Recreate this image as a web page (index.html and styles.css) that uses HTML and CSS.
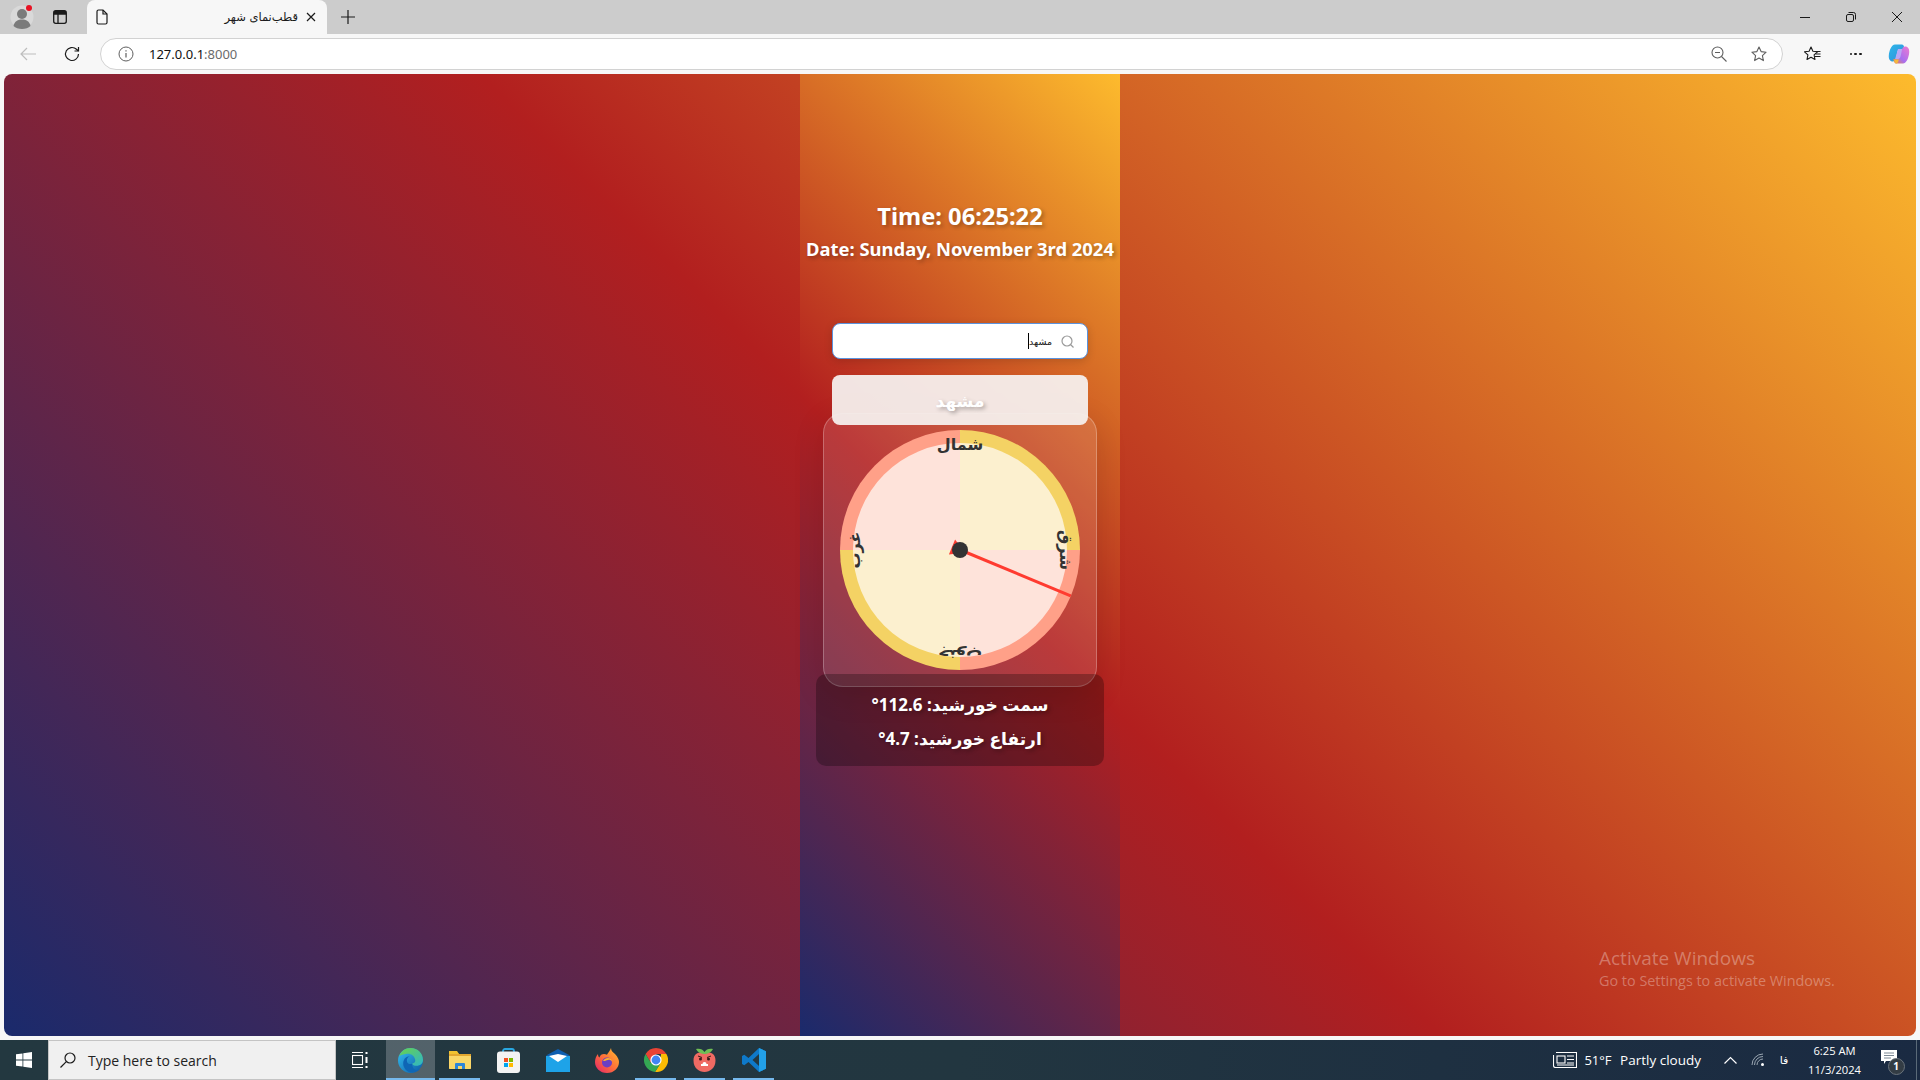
FILE: index.html
```html
<!DOCTYPE html>
<html lang="fa">
<head>
<meta charset="utf-8">
<title>قطب‌نمای شهر</title>
<link rel="stylesheet" href="styles.css">
</head>
<body>
<div class="screen" dir="ltr">
  <header class="tabstrip">
    <div class="profile">
      <svg width="24" height="24" viewBox="0 0 24 24"><circle cx="12" cy="12" r="11.5" fill="#d9d9d9"/><circle cx="12" cy="9" r="5" fill="#7b7b7b"/><path d="M3.5 21c1-5 4.500-6.500 8.500-6.500s7.500 1.500 8.500 6.500c-2 1.800-5 3-8.500 3s-6.500-1.200-8.500-3z" fill="#7b7b7b"/></svg>
      <span class="profile-dot"></span>
    </div>
    <svg class="sidebar-icon" width="16" height="16" viewBox="0 0 16 16" fill="none" stroke="#1a1a1a" stroke-width="1.3"><rect x="1.700" y="1.700" width="12.600" height="12.600" rx="2"/><path d="M1.700 5h12.600M6 5v9.300"/><path d="M2 2h12v3H2z" fill="#1a1a1a" stroke="none"/></svg>
    <div class="tab">
      <svg width="12" height="16" viewBox="0 0 12 16" fill="none" stroke="#1a1a1a" stroke-width="1.200"><path d="M1 2.500a1.500 1.500 0 0 1 1.500-1.500h4.500l4 4v8.500a1.500 1.500 0 0 1-1.500 1.500h-7a1.500 1.500 0 0 1-1.500-1.500z"/><path d="M7 1v4h4"/></svg>
      <span class="tab-title" dir="rtl">قطب‌نمای شهر</span>
      <svg class="tab-close" width="10" height="10" viewBox="0 0 10 10" stroke="#1a1a1a" stroke-width="1.200"><path d="M1 1l8 8M9 1l-8 8"/></svg>
    </div>
    <svg class="new-tab" width="14" height="14" viewBox="0 0 14 14" stroke="#1a1a1a" stroke-width="1.200"><path d="M7 0v14M0 7h14"/></svg>
    <div class="window-controls">
      <svg width="10" height="10" viewBox="0 0 10 10" stroke="#1a1a1a"><path d="M0 5.500h10"/></svg>
      <svg width="10" height="10" viewBox="0 0 10 10" fill="none" stroke="#1a1a1a"><rect x=".5" y="2.500" width="7" height="7" rx="1.500"/><path d="M2.500 .5h5a2 2 0 0 1 2 2v5"/></svg>
      <svg width="10" height="10" viewBox="0 0 10 10" stroke="#1a1a1a"><path d="M0 0l10 10M10 0l-10 10"/></svg>
    </div>
  </header>

  <nav class="toolbar">
    <svg class="back" width="16" height="14" viewBox="0 0 16 14" fill="none" stroke="#bdbdbd" stroke-width="1.200"><path d="M16 7H1M7 1L1 7l6 6"/></svg>
    <svg class="reload" width="16" height="16" viewBox="0 0 16 16" fill="none" stroke="#1a1a1a" stroke-width="1.200"><path d="M14.500 8a6.500 6.500 0 1 1-2-4.700L14.500 5"/><path d="M14.500 1v4h-4"/></svg>
    <div class="address">
      <svg width="16" height="16" viewBox="0 0 16 16" fill="none" stroke="#5f5f5f"><circle cx="8" cy="8" r="7"/><path d="M8 7v4.500M8 4.200v1.300" stroke-width="1.200"/></svg>
      <span class="url">127.0.0.1<span class="url-port">:8000</span></span>
      <span class="spacer"></span>
      <svg width="16" height="16" viewBox="0 0 16 16" fill="none" stroke="#5f5f5f" stroke-width="1.100"><circle cx="6.500" cy="6.500" r="5.500"/><path d="M10.500 10.500L15.500 15.500M4 6.500h5"/></svg>
      <svg class="star" width="16" height="16" viewBox="0 0 16 16" fill="none" stroke="#5f5f5f" stroke-width="1.100"><path d="M8 1l2.100 4.600 5 .6-3.700 3.400 1 5-4.400-2.500-4.400 2.500 1-5L.9 6.200l5-.6z" stroke-linejoin="round"/></svg>
    </div>
    <svg class="favs" width="17" height="16" viewBox="0 0 17 16" fill="none" stroke="#1a1a1a" stroke-width="1.100"><path d="M7 1l1.900 4.300 4.600.5-3.400 3.100.9 4.600-4-2.300-4 2.300.9-4.600L.5 5.800l4.600-.5z" stroke-linejoin="round"/><path d="M11 5.500h5.500M11.500 8h5M11 10.500h5.500" /></svg>
    <div class="dots"><i></i><i></i><i></i></div>
    <svg class="copilot" width="22" height="22" viewBox="0 0 22 22">
      <defs>
        <linearGradient id="cpa" x1="0" y1="0" x2="1" y2="1"><stop offset="0" stop-color="#2fb7ea"/><stop offset=".55" stop-color="#2fa0e0"/><stop offset="1" stop-color="#3ecf7a"/></linearGradient>
        <linearGradient id="cpb" x1="1" y1="0" x2="0" y2="1"><stop offset="0" stop-color="#ee7ad0"/><stop offset=".6" stop-color="#a86ff0"/><stop offset="1" stop-color="#f08a30"/></linearGradient>
      </defs>
      <path d="M7 1.500h7c1 0 1.500.8 1.800 1.800L17 6 12 6c-1.500 0-2 1-2.500 2.500L7.800 16c-.4 1.300-1.300 2.500-3 2.500C2 18.500.5 16 .8 12.500 1.200 7.500 3.500 1.500 7 1.500z" fill="url(#cpa)"/>
      <path d="M10 6h6l-2.500 9-1 1.500H7z" fill="#b9a6f5"/>
      <path d="M15 20.500H8c-1 0-1.500-.8-1.800-1.800L5 16h5c1.500 0 2-1 2.500-2.500L14.200 6c.4-1.300 1.300-2.500 3-2.500 2.800 0 4.300 2.500 4 6-.4 5-2.700 11-6.200 11z" fill="url(#cpb)"/>
      <path d="M9 20.500c-1 0-2-.5-2.500-2L6 16.500h5l-1 2.500z" fill="#f5b83d"/>
    </svg>
  </nav>

  <div class="window-body">
    <main class="page">
      <section class="column">
        <div class="clock">
          <h1 class="time">Time: 06:25:22</h1>
          <h2 class="date">Date: Sunday, November 3rd 2024</h2>
        </div>
        <div class="search" dir="rtl">
          <svg width="13" height="13" viewBox="0 0 13 13" fill="none" stroke="#9a9a9a" stroke-width="1.200"><circle cx="6" cy="6" r="5"/><path d="M9.500 9.500l3 3"/></svg>
          <span class="search-text">مشهد</span><span class="caret"></span>
        </div>
        <div class="suggestion" dir="rtl">مشهد</div>
        <div class="compass-card">
          <div class="compass">
            <div class="compass-face"></div>
            <span class="dir dir-n">شمال</span>
            <span class="dir dir-e">شرق</span>
            <span class="dir dir-s">جنوب</span>
            <span class="dir dir-w">غرب</span>
            <div class="needle"></div>
            <div class="hub"></div>
          </div>
        </div>
        <div class="sun-info" dir="rtl">
          <p>سمت خورشید: 112.6°</p>
          <p>ارتفاع خورشید: 4.7°</p>
        </div>
      </section>
      <div class="activate">
        <div class="activate-title">Activate Windows</div>
        <div class="activate-sub">Go to Settings to activate Windows.</div>
      </div>
    </main>
  </div>

  <footer class="taskbar">
    <div class="start">
      <svg width="16" height="16" viewBox="0 0 16 16" fill="#fff"><path d="M0 2.300l6.500-.9v6.200H0zM7.300 1.300L16 0v7.600H7.300zM0 8.400h6.500v6.200L0 13.700zM7.300 8.400H16V16l-8.700-1.300z"/></svg>
    </div>
    <div class="task-search">
      <svg width="16" height="16" viewBox="0 0 16 16" fill="none" stroke="#1a1a1a" stroke-width="1.200"><circle cx="10" cy="6" r="5"/><path d="M6.300 9.700L.5 15.500"/></svg>
      <span>Type here to search</span>
    </div>
    <div class="task-view">
      <svg width="16" height="16" viewBox="0 0 16 16" fill="none" stroke="#fff" stroke-width="1.100"><path d="M0 .5h11M0 15.500h11"/><rect x=".5" y="3.500" width="10" height="9"/><path d="M14.500 0v2M14.500 5v6M14.500 14v2" stroke-width="2"/></svg>
    </div>
    <div class="apps">
      <div class="app app-edge running">
        <svg width="25" height="25" viewBox="0 0 24 24">
          <defs>
            <linearGradient id="ed1" x1="0" y1="0" x2="1" y2="1"><stop offset="0" stop-color="#35c1f1"/><stop offset="1" stop-color="#0c59a4"/></linearGradient>
            <linearGradient id="ed2" x1="0" y1="0" x2="1" y2="1"><stop offset="0" stop-color="#6ad34a"/><stop offset="1" stop-color="#2fb5c8"/></linearGradient>
          </defs>
          <circle cx="12" cy="12" r="12" fill="url(#ed1)"/>
          <path d="M1 8C3 3 7 0 12 0c7 0 12 5 12 11.500 0 3.500-3 5.500-6 5.500-2.500 0-4-1-4.500-2 2.500-.5 3.500-2 3-4C15.500 7 12 5 8.500 5.500 5 6 2.500 7 1 8z" fill="url(#ed2)"/>
          <path d="M13.500 15c-1.500 1-5 .5-5-3 0-2 1.300-3.500 3-4-4 0-6.500 3-6.500 7 0 4.500 4 8.500 9 8.500 3 0 5.500-1.200 7-3-3.500 1.500-7 .5-7.500-5.500z" fill="#0f66b5"/>
        </svg>
      </div>
      <div class="app running">
        <svg width="22" height="20" viewBox="0 0 22 20"><path d="M0 2h8l2 2h12v14a1 1 0 0 1-1 1H1a1 1 0 0 1-1-1z" fill="#e3a72f"/><path d="M0 1h8l2 3H0z" fill="#f2c230"/><path d="M0 6h22v12a1 1 0 0 1-1 1H1a1 1 0 0 1-1-1z" fill="#fbd768"/><path d="M6 19v-5a1 1 0 0 1 1-1h8a1 1 0 0 1 1 1v5h-3v-3H9v3z" fill="#2f86d8"/></svg>
      </div>
      <div class="app">
        <svg width="23" height="25" viewBox="0 0 23 25"><path d="M6 7V3a2 2 0 0 1 2-2h7a2 2 0 0 1 2 2v4" fill="none" stroke="#29a7e1" stroke-width="1.800"/><rect y="3.500" width="23" height="21.500" rx="3" fill="#f3f3f3"/><rect x="7" y="10" width="4" height="4" fill="#f25022"/><rect x="12" y="10" width="4" height="4" fill="#7fba00"/><rect x="7" y="15" width="4" height="4" fill="#00a4ef"/><rect x="12" y="15" width="4" height="4" fill="#ffb900"/></svg>
      </div>
      <div class="app">
        <svg width="24" height="23" viewBox="0 0 24 23"><path d="M0 7h24v16H0z" fill="#1ea3e8"/><path d="M0 6.500L12 0l12 6.500L12 9z" fill="#0f5fb0"/><path d="M3 7l9-2 9 2-9 6z" fill="#fff"/></svg>
      </div>
      <div class="app">
        <svg width="24" height="25" viewBox="0 0 24 25"><defs><linearGradient id="ff" x1="1" y1="0" x2="0" y2="1"><stop offset="0" stop-color="#ffc02c"/><stop offset=".5" stop-color="#ff7139"/><stop offset="1" stop-color="#e3206c"/></linearGradient></defs><path d="M16 0c0 3 2 4 4 6 3 3 4 6 4 8 0 6-5 11-12 11S0 20 0 14c0-3 1-6 3-8 0 2 .5 3 1.500 3.500C5 7 7 6 9 6c1 0 2 .3 3 .8C13 4.500 15 3 16 0z" fill="url(#ff)"/><circle cx="12" cy="14.500" r="5" fill="#6c3fc4"/><path d="M8 13c1-2 3-3 5-3 2.500 0 4 1.500 4 3.500-1-1.500-3-2-4-1.500-2 .5-3 1-5 1z" fill="#ffb02c"/></svg>
      </div>
      <div class="app running">
        <svg width="24" height="24" viewBox="0 0 24 24"><path d="M22.400 6A12 12 0 0 1 11 24l5-8 1-10z" fill="#fbbc04"/><path d="M12 0A12 12 0 0 0 1.600 6L7 15l5-9h10.400A12 12 0 0 0 12 0z" fill="#ea4335"/><path d="M1.600 6A12 12 0 0 0 11 24l5-8-9-1z" fill="#34a853"/><circle cx="12" cy="12" r="5.600" fill="#fff"/><circle cx="12" cy="12" r="4.400" fill="#4285f4"/></svg>
      </div>
      <div class="app running">
        <svg width="23" height="24" viewBox="0 0 23 24"><path d="M11.500 5c3-1.500 11-1 11 7.500C22.500 20 17 24 11.500 24S.5 20 .5 12.500C.5 4 8.500 3.500 11.500 5z" fill="#ef6a63"/><path d="M11.500 6C9 6 5 5 3 1c3-1 7 0 8.500 3C13 1 17-.0 20 1c-2 4-6 5-8.500 5z" fill="#6fbe54"/><circle cx="7.500" cy="11" r="1.500" fill="#3a1a1a"/><circle cx="15.500" cy="11" r="1.500" fill="#3a1a1a"/><path d="M5 8l4 1.500M18 8l-4 1.500" stroke="#3a1a1a" fill="none"/><path d="M8 17h7" stroke="#fff" stroke-width="2"/><circle cx="11.500" cy="16" r="2" fill="#fff"/></svg>
      </div>
      <div class="app running">
        <svg width="24" height="24" viewBox="0 0 24 24"><path d="M17 0l7 3.300v17.400L17 24 6.500 14 2.300 17.300 0 16V8l2.300-1.300L6.500 10z" fill="#0e79c9"/><path d="M17 6l-6.500 6L17 18z" fill="#233840"/><path d="M17 0l7 3.300v17.400L17 24z" fill="#22a0e8"/></svg>
      </div>
    </div>
    <span class="spacer"></span>
    <div class="tray">
      <svg class="news" width="24" height="16" viewBox="0 0 24 16" fill="none" stroke="#fff" stroke-width="1.100"><path d="M3 .5h20.500V15.500H2.500a2 2 0 0 1-2-2V3"/><rect x="4" y="4" width="8" height="7"/><path d="M14 4h7M14 7.500h7M14 11h7M4 13h17"/></svg>
      <span class="temp">51°F</span>
      <span class="weather">Partly cloudy</span>
      <svg class="caret-up" width="13" height="8" viewBox="0 0 13 8" fill="none" stroke="#fff" stroke-width="1.200"><path d="M.5 7.500l6-6 6 6"/></svg>
      <svg class="wifi" width="14" height="14" viewBox="0 0 14 14" fill="none" stroke="#9aa6b2" stroke-width="1"><path d="M1 12a11 11 0 0 1 11-11M3.500 12a8.500 8.500 0 0 1 8.500-8.500M6 12a6 6 0 0 1 6-6" /><circle cx="11.500" cy="11.500" r="1.500" fill="#fff" stroke="none"/></svg>
      <span class="lang" dir="rtl">فا</span>
      <div class="datetime"><span>6:25 AM</span><span>11/3/2024</span></div>
      <div class="notify">
        <svg width="16" height="15" viewBox="0 0 16 15" fill="#fff"><path d="M0 0h16v11H5l-2 3v-3H0z"/><path d="M3 3h10M3 5.500h10M3 8h7" stroke="#5a6a78" stroke-width=".8"/></svg>
        <span class="notify-badge">1</span>
      </div>
      <span class="show-desktop"></span>
    </div>
  </footer>
</div>
</body>
</html>
```

FILE: styles.css
```css
* { box-sizing: border-box; }
html, body { margin: 0; padding: 0; height: 100%; overflow: hidden; }
body { font-family: "Noto Sans", "DejaVu Sans", sans-serif; }
.screen { width: 1920px; height: 1080px; display: flex; flex-direction: column; background: #f7f7f7; }
.spacer { flex: 1; }
svg { display: block; flex: none; }

/* tab strip */
.tabstrip { height: 34px; background: #cccccc; display: flex; align-items: center; flex: none; }
.profile { width: 24px; height: 24px; margin-left: 10px; position: relative; }
.profile-dot { position: absolute; top: 0; left: 16px; width: 6px; height: 6px; border-radius: 50%; background: #e81123; }
.sidebar-icon { margin-left: 18px; }
.tab { width: 240px; height: 34px; margin-left: 19px; background: #f7f7f7; border-radius: 8px 8px 0 0; display: flex; align-items: center; padding: 0 11px 0 9px; align-self: flex-end; }
.tab-title { flex: 1; font-family: "DejaVu Sans", sans-serif; font-size: 11.500px; color: #1a1a1a; margin-right: 8px; white-space: nowrap; text-align: start; }
.tab-close { flex: none; }
.new-tab { margin-left: 14px; }
.window-controls { margin-left: auto; display: flex; gap: 36px; padding-right: 18px; }
.window-controls svg { width: 10px; height: 10px; }

/* toolbar */
.toolbar { height: 40px; display: flex; align-items: center; flex: none; background: #f7f7f7; }
.back { margin-left: 20px; }
.reload { margin-left: 28px; }
.address { margin-left: 20px; width: 1683px; height: 32px; background: #fff; border: 1px solid #d2d2d2; border-radius: 16px; display: flex; align-items: center; padding: 0 15.500px 0 17px; }
.url { margin-left: 15px; font-family: "Noto Sans", sans-serif; font-size: 13px; color: #111; }
.url-port { color: #6b6b6b; }
.star { margin-left: 24px; }
.favs { margin-left: 21px; }
.dots { margin-left: 28.500px; width: 12px; display: flex; justify-content: space-between; }
.dots i { width: 2.500px; height: 2.500px; border-radius: 50%; background: #1a1a1a; display: block; }
.copilot { margin-left: 26.500px; }

/* page */
.window-body { flex: 1; padding: 0 4px 4px; min-height: 0; display: flex; background: #f7f7f7; }
.page { flex: 1; border-radius: 8px; overflow: hidden; position: relative; display: flex; justify-content: center; background: linear-gradient(45deg, #1a2a6c, #b21f1f, #fdbb2d); }
.column { width: 320px; height: 100%; display: flex; flex-direction: column; align-items: center; background: linear-gradient(45deg, #1a2a6c, #b21f1f, #fdbb2d); }
.clock { margin-top: 123px; text-align: center; color: #fff; text-shadow: 2px 2px 4px rgba(0, 0, 0, .3); }
.time { margin: 0; font-size: 23.700px; line-height: 38px; font-weight: 700; }
.date { margin: 0; font-size: 18.400px; line-height: 28px; font-weight: 700; white-space: nowrap; }
.search { margin-top: 60px; width: 256px; height: 36px; background: #fff; border: 1.500px solid #5b93dd; border-radius: 8px; display: flex; align-items: center; padding: 0 13px; box-shadow: 0 2px 8px rgba(0, 0, 0, .15); }
.search-text { font-family: "DejaVu Sans", sans-serif; font-size: 9.500px; color: #222; margin-right: 9px; }
.caret { width: 1px; height: 16px; background: #000; }
.suggestion { position: relative; z-index: 2; margin-top: 16px; width: 256px; height: 50px; border-radius: 8px; background: rgba(245, 240, 238, .94); color: #fff; font-family: "DejaVu Sans", sans-serif; font-weight: 700; font-size: 17px; line-height: 52px; text-align: center; text-shadow: 2px 2px 4px rgba(0, 0, 0, .3); }
.compass-card { margin-top: -12px; width: 274px; height: 274px; flex: none; border: 1px solid rgba(255, 255, 255, .25); border-radius: 20px; background: rgba(255, 255, 255, .12); box-shadow: 0 8px 32px rgba(0, 0, 0, .12); display: flex; align-items: center; justify-content: center; }
.compass { width: 240px; height: 240px; border-radius: 50%; position: relative; margin-top: -1px; overflow: hidden; background: conic-gradient(#f4d264 0 25%, #ffa088 25% 50%, #f4d264 50% 75%, #ffa088 75% 100%); }
.compass-face { position: absolute; inset: 13px; border-radius: 50%; background: conic-gradient(#fcf0cf 0 25%, #fee3da 25% 50%, #fcf0cf 50% 75%, #fee3da 75% 100%); }
.dir { position: absolute; left: 50%; top: 50%; width: 60px; margin: -120px 0 0 -30px; height: 240px; padding-top: 2px; text-align: center; font-family: "DejaVu Sans", sans-serif; font-weight: 700; font-size: 16px; line-height: 26px; color: #333; }
.dir-e { transform: rotate(90deg); }
.dir-s { transform: rotate(180deg); }
.dir-w { transform: rotate(270deg); }
.needle { position: absolute; left: 50%; top: 50%; width: 3px; height: 120px; margin: -120px 0 0 -1.500px; background: #ff3b30; transform-origin: 50% 100%; transform: rotate(112.600deg); }
.needle::after { content: ""; position: absolute; left: -6.500px; bottom: -8.500px; border-left: 8px solid transparent; border-right: 8px solid transparent; border-bottom: 14px solid #ff3b30; }
.hub { position: absolute; left: 50%; top: 50%; width: 16px; height: 16px; margin: -8px 0 0 -8px; border-radius: 50%; background: #333; }
.sun-info { position: relative; margin-top: -13px; width: 288px; height: 92px; flex: none; border-radius: 10px; background: rgba(0, 0, 0, .27); color: #fff; text-align: center; padding-top: 14px; font-family: "Noto Sans", "DejaVu Sans", sans-serif; font-weight: 700; font-size: 17px; text-shadow: 2px 2px 4px rgba(0, 0, 0, .3); }
.sun-info p { margin: 0; line-height: 34px; }

.activate { position: absolute; left: 1595px; top: 870.500px; color: rgba(255, 255, 255, .33); font-family: "Open Sans", sans-serif; white-space: nowrap; }
.activate-title { font-size: 19px; line-height: 26px; }
.activate-sub { font-size: 14.400px; line-height: 20px; }

/* taskbar */
.taskbar { height: 40px; flex: none; display: flex; align-items: center; color: #fff; background: linear-gradient(90deg, #233840 0, #223640 50%, #1a2a42 100%); }
.start { width: 48px; height: 40px; display: flex; align-items: center; justify-content: center; }
.task-search { width: 288px; height: 40px; background: #f0f0f0; border: 1px solid #c4c4c4; display: flex; align-items: center; padding-left: 11px; gap: 12px; color: #222; font-family: "Open Sans", sans-serif; font-size: 14px; }
.task-view { width: 47px; margin-right: 3px; display: flex; justify-content: center; }
.apps { display: flex; height: 40px; }
.app { width: 49px; height: 40px; display: flex; align-items: center; justify-content: center; position: relative; }
.app.running::after { content: ""; position: absolute; left: 4px; right: 4px; bottom: 0; height: 2px; background: #76b9ed; }
.app-edge { background: rgba(255, 255, 255, .22); }
.app-edge.running::after { left: 0; right: 0; }
.tray { display: flex; align-items: center; height: 40px; font-family: "Open Sans", sans-serif; font-size: 13px; }
.temp { margin-left: 7.500px; }
.weather { margin-left: 8.500px; font-size: 13.500px; white-space: nowrap; }
.caret-up { margin-left: 23px; }
.wifi { margin-left: 13.500px; }
.lang { margin-left: 13.500px; width: 12px; font-family: "DejaVu Sans", sans-serif; font-size: 11px; text-align: center; }
.datetime { margin-left: 7.500px; width: 74px; display: flex; flex-direction: column; align-items: center; font-size: 11.200px; line-height: 19px; }
.notify { margin-left: 5px; width: 26px; height: 30px; position: relative; padding: 5px 0 0 4px; }
.notify-badge { position: absolute; left: 11px; top: 13px; width: 17px; height: 17px; border-radius: 50%; background: #333c44; border: 1px solid #6a737c; font-size: 10px; line-height: 15px; text-align: center; font-weight: 700; }
.show-desktop { width: 4px; height: 40px; margin-left: 13.500px; border-left: 1px solid #5a6a78; }
```
